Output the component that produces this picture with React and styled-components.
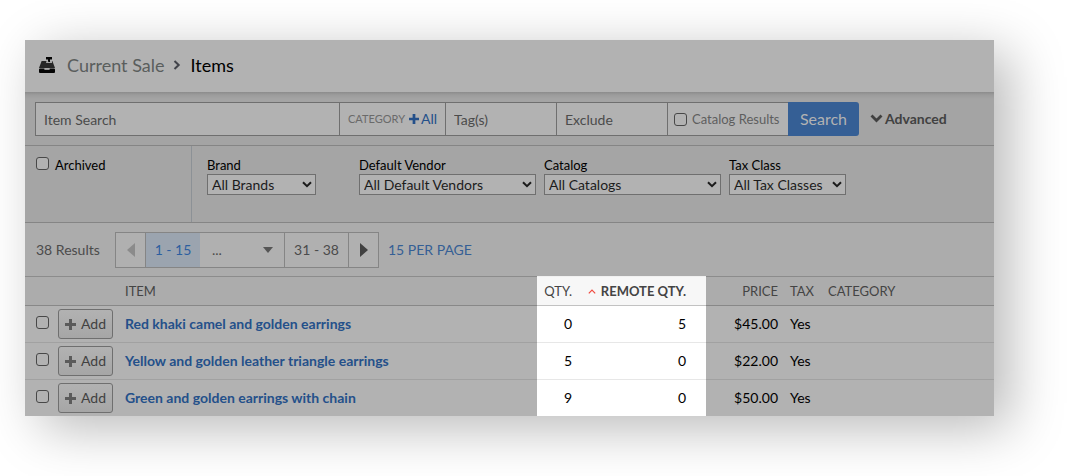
import styled, { createGlobalStyle } from "styled-components";

const filters = [
	{ id: "brand", label: "Brand", value: "All Brands", width: 109, column: 144 },
	{ id: "vendor", label: "Default Vendor", value: "All Default Vendors", width: 177, column: 177 },
	{ id: "catalog", label: "Catalog", value: "All Catalogs", width: 177, column: 177 },
	{ id: "tax", label: "Tax Class", value: "All Tax Classes", width: 117, column: 117 },
];

const items = [
	{ name: "Red khaki camel and golden earrings", qty: 0, remote: 5, price: "$45.00" },
	{ name: "Yellow and golden leather triangle earrings", qty: 5, remote: 0, price: "$22.00" },
	{ name: "Green and golden earrings with chain", qty: 9, remote: 0, price: "$50.00" },
];

export default function App() {
	return (
		<>
			<GlobalStyle />
			<Page>
				<Window>
					<Header>
						<RegisterIcon />
						<a href="#sale">Current Sale</a>
						<Crumb width="8" height="10" viewBox="0 0 8 10">
							<path d="M1.5 1l4.2 4-4.2 4" />
						</Crumb>
						<h1>Items</h1>
					</Header>
					<SearchBar />
					<Filters />
					<Pagination />
					<ItemsTable />
				</Window>
			</Page>
		</>
	);
}

function RegisterIcon() {
	return (
		<svg width="16" height="16" viewBox="0 0 16 16" aria-hidden="true">
			<path d="M7 0h6v2.6h-2V4H9V2.6H7z" fill="#050505" />
			<path d="M2.6 4h10.8L16 11H0z" fill="#262626" />
			<path d="M7.5 4h5.5v2H7z" fill="#a4a4a4" />
			<path d="M9.2 3h1.8v2H9.2z" fill="#050505" />
			<path d="M1 11.6h4.5v1.2h5v-1.2H15a1 1 0 0 1 1 1V15a1 1 0 0 1-1 1H1a1 1 0 0 1-1-1v-2.4a1 1 0 0 1 1-1z" fill="#050505" />
			<path d="M5.5 11.4h5v1h-5z" fill="#a4a4a4" />
		</svg>
	);
}

function Plus({ size, color }) {
	return (
		<svg width={size} height={size} viewBox="0 0 11 11" aria-hidden="true">
			<path d="M4 0h3v4h4v3H7v4H4V7H0V4h4z" fill={color} />
		</svg>
	);
}

function SearchBar() {
	return (
		<Toolbar>
			<SearchInput $grow aria-label="Item Search" placeholder="Item Search" />
			<CategoryBox>
				<span>CATEGORY</span>
				<a href="#category">
					<Plus size={10} color="#24508a" />
					All
				</a>
			</CategoryBox>
			<SearchInput aria-label="Tags" placeholder="Tag(s)" />
			<SearchInput aria-label="Exclude" placeholder="Exclude" />
			<CatalogLabel>
				<Checkbox type="checkbox" />
				Catalog Results
			</CatalogLabel>
			<SearchButton>Search</SearchButton>
			<AdvancedButton>
				<svg width="13" height="9" viewBox="0 0 13 9">
					<path d="M1.5 1.5l5 5 5-5" fill="none" stroke="#414141" strokeWidth="2.8" />
				</svg>
				Advanced
			</AdvancedButton>
		</Toolbar>
	);
}

function Filters() {
	return (
		<FilterBar>
			<Archived>
				<Checkbox type="checkbox" />
				Archived
			</Archived>
			<FilterList>
				{filters.map((filter) => (
					<Filter key={filter.id} $width={filter.column}>
						<label htmlFor={filter.id}>{filter.label}</label>
						<SelectBox $width={filter.width}>
							<select id={filter.id}>
								<option>{filter.value}</option>
							</select>
							<svg width="10" height="7" viewBox="0 0 10 7">
								<path d="M1 1.2l4 4 4-4" fill="none" stroke="#1c1c1c" strokeWidth="2" />
							</svg>
						</SelectBox>
					</Filter>
				))}
			</FilterList>
		</FilterBar>
	);
}

function Pagination() {
	return (
		<PageBar>
			<span>38 Results</span>
			<Pager>
				<PageButton $width={29} aria-label="Previous" disabled>
					<svg width="8" height="14" viewBox="0 0 8 14">
						<path d="M8 0v14L0 7z" fill="#8b8b8b" />
					</svg>
				</PageButton>
				<PageButton $width={55} $active>
					1 - 15
				</PageButton>
				<PageSelect>
					<select aria-label="Page">
						<option>...</option>
					</select>
					<svg width="10" height="6" viewBox="0 0 10 6">
						<path d="M0 0h10L5 6z" fill="#555555" />
					</svg>
				</PageSelect>
				<PageButton $width={63}>31 - 38</PageButton>
				<PageButton $width={30} aria-label="Next">
					<svg width="8" height="14" viewBox="0 0 8 14">
						<path d="M0 0v14l8-7z" fill="#414141" />
					</svg>
				</PageButton>
			</Pager>
			<a href="#per-page">15 PER PAGE</a>
		</PageBar>
	);
}

function ItemsTable() {
	return (
		<Table>
			<colgroup>
				<col width="33" />
				<col width="61" />
				<col />
				<col width="41" />
				<col width="128" />
				<col width="78" />
				<col width="38" />
				<col width="172" />
			</colgroup>
			<thead>
				<tr>
					<HeadCell />
					<HeadCell />
					<HeadCell>ITEM</HeadCell>
					<HeadCell $right $lit>QTY.</HeadCell>
					<HeadCell $right $lit $sorted>
						<svg width="8" height="5" viewBox="0 0 8 5">
							<path d="M.8 4.4L4 1.2l3.2 3.2" fill="none" stroke="#f0493e" strokeWidth="1.2" />
						</svg>
						REMOTE QTY.
					</HeadCell>
					<HeadCell $right>PRICE</HeadCell>
					<HeadCell>TAX</HeadCell>
					<HeadCell>CATEGORY</HeadCell>
				</tr>
			</thead>
			<tbody>
				{items.map((item) => (
					<tr key={item.name}>
						<CheckCell>
							<Checkbox type="checkbox" aria-label={item.name} />
						</CheckCell>
						<AddCell>
							<AddButton>
								<Plus size={11} color="#5b5b5b" />
								Add
							</AddButton>
						</AddCell>
						<Cell>
							<a href="#item">{item.name}</a>
						</Cell>
						<Cell $right $lit>{item.qty}</Cell>
						<Cell $right $lit $wide>{item.remote}</Cell>
						<Cell $right>{item.price}</Cell>
						<Cell>Yes</Cell>
						<Cell />
					</tr>
				))}
			</tbody>
		</Table>
	);
}

const GlobalStyle = createGlobalStyle`
	* {
		box-sizing: border-box;
	}
	body {
		margin: 0;
		background: #ffffff;
		font-family: Lato, sans-serif;
		font-size: 14px;
		line-height: 18px;
		color: #000000;
	}
	a {
		text-decoration: none;
	}
	button, input, select {
		font: inherit;
		margin: 0;
	}
`;

const Page = styled.div`
	padding: 40px 75px 60px 25px;
`;

const Window = styled.main`
	background: #b2b2b2;
	box-shadow: 16px 12px 50px rgba(0, 0, 0, 0.28);
`;

const Header = styled.header`
	display: flex;
	align-items: center;
	height: 52px;
	padding: 0 14px 2px;
	background: #b2b2b2;
	font-size: 18px;
	line-height: 24px;
	a {
		margin-left: 12px;
		color: #5a5e5d;
	}
	h1 {
		margin: 0;
		font-size: 18px;
		font-weight: 400;
	}
`;

const Crumb = styled.svg`
	margin: 0 9px;
	fill: none;
	stroke: #41434a;
	stroke-width: 2;
`;

const Toolbar = styled.form`
	display: flex;
	height: 54px;
	padding: 10px;
	background: linear-gradient(#8c8c8c, #9c9c9c 3px, #a4a4a4 7px);
	border-bottom: 1px solid #858585;
`;

const SearchInput = styled.input`
	flex: ${(props) => (props.$grow ? "1 1 0" : "0 0 111px")};
	min-width: 0;
	height: 34px;
	padding: 0 8px;
	background: #b2b2b2;
	border: 1px solid #6f6f6f;
	border-right: ${(props) => (props.$grow ? "1px solid #6f6f6f" : "none")};
	border-radius: 0;
	&::placeholder {
		color: #4b4b4b;
		opacity: 1;
	}
`;

const CategoryBox = styled.div`
	display: flex;
	align-items: center;
	justify-content: space-between;
	width: 105px;
	height: 34px;
	padding: 0 8px;
	background: #b2b2b2;
	border: solid #6f6f6f;
	border-width: 1px 0;
	span {
		font-size: 11px;
		color: #6a6a6a;
	}
	a {
		display: flex;
		align-items: center;
		gap: 2px;
		color: #24508a;
	}
`;

const CatalogLabel = styled.label`
	display: flex;
	align-items: center;
	gap: 5px;
	width: 121px;
	height: 34px;
	padding-left: 6px;
	background: #b2b2b2;
	border: 1px solid #6f6f6f;
	border-right: none;
	color: #5e5e5e;
	font-size: 13px;
	white-space: nowrap;
`;

const Checkbox = styled.input`
	appearance: none;
	flex: none;
	display: block;
	width: 13px;
	height: 13px;
	border: 1px solid #484848;
	border-radius: 3px;
	background: #b2b2b2;
	&:checked {
		background: #355f95;
	}
`;

const SearchButton = styled.button`
	width: 71px;
	height: 34px;
	padding: 0;
	border: none;
	border-radius: 0 3px 3px 0;
	background: #355f95;
	color: #b2b2b2;
	font-size: 16px;
`;

const AdvancedButton = styled.button`
	display: flex;
	align-items: center;
	gap: 2px;
	width: 125px;
	padding: 0 0 0 11px;
	border: none;
	background: none;
	color: #414141;
	font-weight: 700;
`;

const FilterBar = styled.section`
	display: flex;
	height: 77px;
	background: #a5a5a5;
	border-bottom: 1px solid #858585;
	font-size: 13px;
`;

const Archived = styled.label`
	display: flex;
	align-items: flex-start;
	gap: 6px;
	width: 167px;
	padding: 11px;
	border-right: 1px solid #8c9196;
	line-height: 17px;
`;

const FilterList = styled.div`
	display: flex;
	gap: 8px;
	padding: 10px 15px;
`;

const Filter = styled.div`
	width: ${(props) => props.$width}px;
	label {
		display: block;
	}
`;

const SelectBox = styled.div`
	position: relative;
	width: ${(props) => props.$width}px;
	select {
		appearance: none;
		display: block;
		width: 100%;
		height: 21px;
		padding: 0 4px;
		border: 1px solid #6f6f6f;
		border-radius: 0;
		background: #b2b2b2;
		color: #1c1c1c;
		font-size: 14px;
	}
	svg {
		position: absolute;
		top: 7px;
		right: 4px;
		pointer-events: none;
	}
`;

const PageBar = styled.nav`
	display: flex;
	align-items: center;
	height: 53px;
	padding: 0 11px;
	background: #acacac;
	color: #4b4b4b;
	a {
		margin-left: 9px;
		color: #355f95;
	}
	> span {
		width: 79px;
	}
`;

const Pager = styled.div`
	display: flex;
	height: 36px;
	border: 1px solid #858585;
`;

const PageButton = styled.button`
	display: flex;
	align-items: center;
	justify-content: center;
	width: ${(props) => props.$width}px;
	padding: 0;
	border: none;
	background: ${(props) => (props.$active ? "#9ba4af" : "#b0b0b0")};
	color: ${(props) => (props.$active ? "#2d5f9f" : "#4b4b4b")};
	& + & {
		border-left: 1px solid #858585;
	}
`;

const PageSelect = styled.div`
	position: relative;
	width: 85px;
	border-right: 1px solid #858585;
	select {
		appearance: none;
		width: 100%;
		height: 100%;
		padding: 0 12px;
		border: none;
		border-radius: 0;
		background: #b0b0b0;
		color: #4b4b4b;
	}
	svg {
		position: absolute;
		top: 14px;
		right: 11px;
		pointer-events: none;
	}
`;

const Table = styled.table`
	width: 100%;
	table-layout: fixed;
	border-collapse: separate;
	border-spacing: 0;
`;

const Cell = styled.td`
	height: 36px;
	padding: 0 ${(props) => (props.$wide ? 20 : 6)}px 0 6px;
	background: ${(props) => (props.$lit ? "#ffffff" : "#b2b2b2")};
	text-align: ${(props) => (props.$right ? "right" : "left")};
	tr:not(:last-child) > & {
		height: 37px;
		border-bottom: 1px solid ${(props) => (props.$lit ? "#e7e7e7" : "#a1a1a1")};
	}
	a {
		color: #24508a;
		font-weight: 700;
	}
`;

const CheckCell = styled(Cell)`
	padding: 0 0 4px 11px;
`;

const AddCell = styled(Cell)`
	padding: 0;
`;

const HeadCell = styled.th`
	height: 30px;
	padding: 0 ${(props) => (props.$sorted ? 20 : 6)}px 0 6px;
	background: ${(props) => (props.$lit ? "#f7f7f7" : "#acacac")};
	border-top: 1px solid ${(props) => (props.$lit ? "#f0f0f0" : "#8c8c8c")};
	border-bottom: 1px solid ${(props) => (props.$lit ? "#c2c2c2" : "#888888")};
	color: #444444;
	font-size: 13px;
	font-weight: ${(props) => (props.$sorted ? 700 : 400)};
	text-align: ${(props) => (props.$right ? "right" : "left")};
	white-space: nowrap;
	svg {
		margin-right: 5px;
		vertical-align: 2px;
	}
`;

const AddButton = styled.button`
	display: flex;
	align-items: center;
	justify-content: center;
	gap: 5px;
	width: 55px;
	height: 30px;
	padding: 0;
	border: 1px solid #6f6f6f;
	border-radius: 3px;
	background: linear-gradient(#b2b2b2, #a6a6a6);
	color: #414141;
`;
